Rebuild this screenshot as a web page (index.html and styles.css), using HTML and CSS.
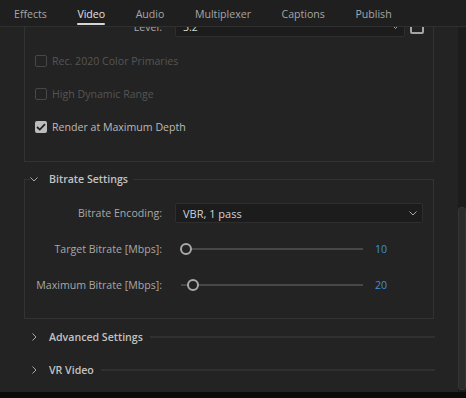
FILE: index.html
```html
<!DOCTYPE html>
<html lang="en">
<head>
  <meta charset="UTF-8" />
  <title>Export Settings - Video</title>
  <link rel="stylesheet" href="styles.css">
</head>
<body>
  <div class="window">
    <nav class="tabs">
      <span class="tab">Effects</span>
      <span class="tab active">Video</span>
      <span class="tab">Audio</span>
      <span class="tab">Multiplexer</span>
      <span class="tab">Captions</span>
      <span class="tab">Publish</span>
    </nav>

    <div class="viewport">
      <div class="scroll">
        <div class="panel">
          <div class="row">
            <label class="label">Level:</label>
            <div class="control">
              <div class="select level">
                <span>3.2</span>
                <svg class="arrow" width="7" height="4" viewBox="0 0 7 4"><polyline points="0.5,0.5 3.5,3.5 6.5,0.5" /></svg>
              </div>
              <span class="link-box"></span>
            </div>
          </div>

          <div class="checks">
            <div class="check disabled"><span class="box"></span>Rec. 2020 Color Primaries</div>
            <div class="check disabled"><span class="box"></span>High Dynamic Range</div>
            <div class="check">
              <span class="box checked">
                <svg width="10" height="8" viewBox="0 0 10 8"><polyline points="1,4 3.8,6.6 9,1.2" /></svg>
              </span>
              Render at Maximum Depth
            </div>
          </div>
        </div>

        <fieldset class="group">
          <legend class="group-title">
            <svg class="caret-down" width="8" height="5" viewBox="0 0 8 5"><polyline points="0.5,0.5 4,4 7.5,0.5" /></svg>
            Bitrate Settings
          </legend>

          <div class="row first">
            <label class="label">Bitrate Encoding:</label>
            <div class="control">
              <div class="select encoding">
                <span>VBR, 1 pass</span>
                <svg class="arrow" width="8" height="5" viewBox="0 0 8 5"><polyline points="0.5,0.5 4,4 7.5,0.5" /></svg>
              </div>
            </div>
          </div>

          <div class="row">
            <label class="label">Target Bitrate [Mbps]:</label>
            <div class="control slider">
              <div class="track"><span class="knob" style="left: 2.7%"></span></div>
              <span class="value">10</span>
            </div>
          </div>

          <div class="row">
            <label class="label">Maximum Bitrate [Mbps]:</label>
            <div class="control slider">
              <div class="track"><span class="knob" style="left: 6.6%"></span></div>
              <span class="value">20</span>
            </div>
          </div>
        </fieldset>

        <div class="collapsed">
          <svg class="caret-right" width="5" height="8" viewBox="0 0 5 8"><polyline points="0.5,0.5 4,4 0.5,7.5" /></svg>
          <span class="title">Advanced Settings</span>
          <span class="rule"></span>
        </div>

        <div class="collapsed">
          <svg class="caret-right" width="5" height="8" viewBox="0 0 5 8"><polyline points="0.5,0.5 4,4 0.5,7.5" /></svg>
          <span class="title">VR Video</span>
          <span class="rule"></span>
        </div>
      </div>

      <div class="scrollbar">
        <div class="thumb"></div>
      </div>
    </div>
  </div>
</body>
</html>
```

FILE: styles.css
```css
body {
  margin: 0;
  background-color: #0b0b0b;
  font-family: "Open Sans", "Noto Sans", sans-serif;
  font-size: 10.6px;
  color: #b4b4b4;
}

.window {
  height: 392px;
  display: flex;
  flex-direction: column;
  background-color: #232323;
}

/* tabs */
.tabs {
  height: 26px;
  flex-shrink: 0;
  display: flex;
  align-items: center;
  gap: 30.5px;
  padding-left: 14px;
  background-color: #1f1f1f;
  border-bottom: 1px solid #2f2f2f;
}

.tab {
  position: relative;
  color: #a6a6a6;
  line-height: 26px;
  padding-top: 2px;
}

.tab.active {
  color: #e2e2e2;
}

.tab.active::after {
  content: "";
  position: absolute;
  left: 0;
  right: 0;
  bottom: 2px;
  height: 2px;
  border-radius: 1px;
  background-color: #d6d6d6;
}

/* scrolled area */
.viewport {
  flex: 1;
  display: flex;
  overflow: hidden;
}

.scroll {
  flex: 1;
  margin-top: -16px;
}

.scrollbar {
  width: 8px;
  background-color: #1c1c1c;
}

.thumb {
  margin-top: 180px;
  height: 183px;
  background-color: #2b2b2b;
  border: 1px solid #353535;
  border-radius: 3px;
  box-sizing: border-box;
}

/* panels */
.panel {
  margin-left: 24px;
  width: 410px;
  box-sizing: border-box;
  border: 1px solid #333;
  padding: 5px 0 18px 0;
}

.row {
  display: grid;
  grid-template-columns: 137px 1fr;
  column-gap: 13px;
  align-items: center;
  height: 20px;
  margin-top: 16px;
}

.panel .row {
  margin-top: 0;
}

.row.first {
  margin-top: 15px;
}

.label {
  text-align: right;
  color: #a8a8a8;
  white-space: nowrap;
}

.control {
  display: flex;
  align-items: center;
}

.select {
  height: 20px;
  box-sizing: border-box;
  display: flex;
  align-items: center;
  justify-content: space-between;
  padding: 0 5px 0 7px;
  background-color: #1c1c1c;
  border: 1px solid #2e2e2e;
  border-radius: 2px;
  color: #d2d2d2;
}

.select.level {
  width: 230px;
}

.select.encoding {
  width: 248px;
  font-size: 11px;
}

.arrow polyline,
.caret-down polyline,
.caret-right polyline {
  fill: none;
  stroke: #a8a8a8;
  stroke-width: 1;
}

.link-box {
  width: 14px;
  height: 14px;
  box-sizing: border-box;
  margin-left: 5px;
  border: 2px solid #a4a4a4;
  border-radius: 2px;
}

.checks {
  padding-top: 7px;
  padding-left: 10px;
}

.check {
  height: 33px;
  display: flex;
  align-items: center;
  color: #bababa;
}

.check.disabled {
  color: #555;
}

.box {
  width: 12px;
  height: 12px;
  box-sizing: border-box;
  margin-right: 5px;
  border: 1px solid #474747;
  border-radius: 2px;
  display: flex;
  align-items: center;
  justify-content: center;
}

.box.checked {
  border: none;
  background-color: #bcbcbc;
}

.box.checked polyline {
  fill: none;
  stroke: #222;
  stroke-width: 1.8;
}

/* bitrate group */
.group {
  margin: 8px 0 0 24px;
  width: 410px;
  box-sizing: border-box;
  border: 1px solid #333;
  padding: 0 0 23px 0;
}

.group-title {
  display: flex;
  align-items: center;
  margin-left: 5px;
  padding: 0 5px 0 0;
  height: 18px;
  font-weight: 600;
  color: #c2c2c2;
}

.caret-down {
  margin-right: 11px;
}

.slider .track {
  position: relative;
  width: 182px;
  height: 2px;
  margin-left: 6px;
  background-color: #474747;
}

.knob {
  position: absolute;
  top: 50%;
  width: 12px;
  height: 12px;
  box-sizing: border-box;
  transform: translate(-50%, -50%);
  border: 2px solid #a9a9a9;
  border-radius: 50%;
  background-color: #232323;
}

.value {
  margin-left: 12px;
  color: #3f8fdc;
}

/* collapsed sections */
.collapsed {
  display: flex;
  align-items: center;
  height: 20px;
  margin: 13px 0 0 24px;
  width: 411px;
}

.group + .collapsed {
  margin-top: 8px;
}

.caret-right {
  margin: 0 12px 0 8px;
}

.collapsed .title {
  font-weight: 600;
  color: #c2c2c2;
}

.rule {
  flex: 1;
  height: 2px;
  margin-left: 7px;
  background-color: #303030;
}
```
